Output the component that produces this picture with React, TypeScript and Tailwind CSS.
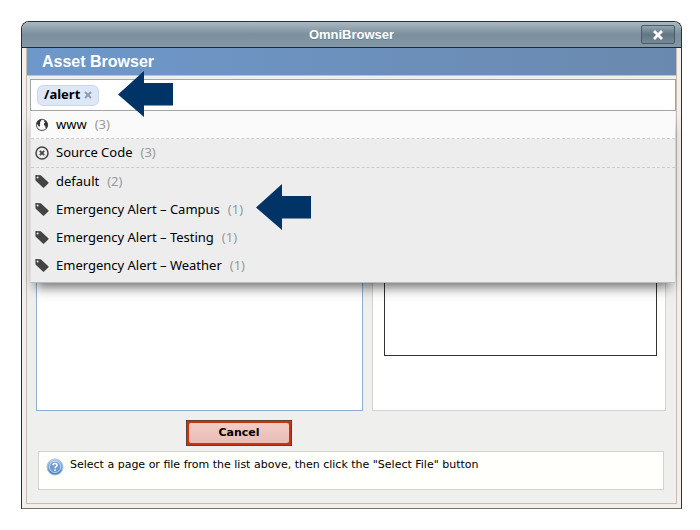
import { useState } from "react";

type TagItem = { name: string; count: number };

const tags: TagItem[] = [
  { name: "default", count: 2 },
  { name: "Emergency Alert – Campus", count: 1 },
  { name: "Emergency Alert – Testing", count: 1 },
  { name: "Emergency Alert – Weather", count: 1 },
];

function GlobeIcon() {
  return (
    <svg viewBox="0 0 14 14" className="h-3.5 w-3.5 shrink-0" aria-hidden="true">
      <circle cx="7" cy="7" r="5.6" fill="#fafafa" stroke="#666" strokeWidth="1.1" />
      <path
        d="M1.3 5.4 2.6 2.9 5 1.4 6.4 1.6 6 3 5 4 5.2 5 4.8 6.4 5 7.6 4.2 9 3.4 8 2.6 6.6ZM9.4 2 11.4 3.2 12.8 6 12.6 8.4 11.2 10.6 10.4 9.6 10.2 7.8 9 7 9 5.6 10 4.800 9.2 3.6Z"
        fill="#333"
      />
    </svg>
  );
}

function SourceIcon() {
  return (
    <svg viewBox="0 0 14 14" className="h-3.5 w-3.5 shrink-0" aria-hidden="true">
      <circle cx="7" cy="7" r="6" fill="none" stroke="#444" strokeWidth="1.5" />
      <path d="M4.8 4.8 9.2 9.2M9.2 4.8 4.8 9.2" stroke="#444" strokeWidth="1.8" />
    </svg>
  );
}

function TagIcon() {
  return (
    <svg viewBox="0 0 14 14" className="h-3.5 w-3.5 shrink-0" aria-hidden="true">
      <path
        d="M.3.8Q.3.1 1 .1L5.8.3 13.3 7.2Q13.9 7.8 13.3 8.4L9.1 12.5Q8.5 13.1 7.9 12.5L.5 5.6ZM2.6 1.5A1 1 0 1 0 2.6 3.5 1 1 0 1 0 2.6 1.5Z"
        fill="#444"
        fillRule="evenodd"
      />
    </svg>
  );
}

function HelpIcon() {
  return (
    <svg viewBox="0 0 18 18" className="h-[18px] w-[18px] shrink-0" aria-hidden="true">
      <defs>
        <linearGradient id="help" x1="0" y1="0" x2="0" y2="1">
          <stop offset="0" stopColor="#b9d2f0" />
          <stop offset="1" stopColor="#4379bd" />
        </linearGradient>
      </defs>
      <circle cx="9" cy="9" r="8" fill="url(#help)" stroke="#a9c3e2" />
      <circle cx="9" cy="9" r="5.6" fill="#6f9bd2" stroke="#c6daf1" strokeWidth=".8" />
      <path
        d="M6.9 7.3C6.9 4.9 11.1 4.9 11.1 7.3 11.1 8.7 9 8.7 9 10.3"
        fill="none"
        stroke="#fff"
        strokeWidth="1.5"
      />
      <circle cx="9" cy="12.2" r=".9" fill="#fff" />
    </svg>
  );
}

function Arrow({ className }: { className: string }) {
  return (
    <svg viewBox="0 0 55 46" className={`absolute z-20 h-[46px] w-[55px] ${className}`} aria-hidden="true">
      <path d="M0 23.5 26 0V12H55V34.5H26V46Z" fill="#003366" />
    </svg>
  );
}

function Count({ value }: { value: number }) {
  return <span className="ml-2 text-[#999]">({value})</span>;
}

export default function App() {
  const [query, setQuery] = useState("");

  return (
    <main className="min-h-screen bg-white pt-[21px] pr-[18px] pl-[21px] font-['Liberation_Sans',sans-serif]">
      <section className="rounded-t-lg border border-[#2b3035] border-b-[#777068] bg-[#f3efea]">
        <header className="relative flex h-[26px] items-center justify-center rounded-t-[7px] border-b border-[#1f2a33] bg-linear-to-b from-[#a9b8c3] via-[#7b8f9d] to-[#8297a8]">
          <h1 className="text-[13px] font-bold text-white text-shadow-2xs">OmniBrowser</h1>
          <button
            type="button"
            aria-label="Close"
            className="absolute right-1.5 flex h-[19px] w-[34px] items-center justify-center rounded-xs border border-[#4b5b66] bg-linear-to-b from-[#93a5b2] via-[#627783] to-[#748995]"
          >
            <svg viewBox="0 0 10 10" className="h-2.5 w-2.5">
              <path d="M1 1 9 9M9 1 1 9" stroke="#fff" strokeWidth="2.8" />
            </svg>
          </button>
        </header>

        <div className="mx-1 mb-1 border border-t-0 border-[#c9bbb0] bg-[#efefee]">
          <div className="flex h-7 items-center border-b border-[#b4c8cc] bg-linear-to-r from-[#6e98cb] to-[#6a89ae] pl-[15px]">
            <h2 className="text-base font-bold text-white">Asset Browser</h2>
          </div>

          <div className="relative mt-[3px] ml-[3px]">
            <div className="flex h-8 items-center border border-[#a5a5a5] bg-white pl-1.5 font-['Noto_Sans',sans-serif]">
              <span className="flex h-[21px] shrink-0 items-center gap-1 rounded-md border border-[#ccd6ee] bg-[#dee7f8] px-1.5 text-[13px] font-bold text-black">
                /alert
                <button type="button" aria-label="Remove /alert">
                  <svg viewBox="0 0 8 8" className="h-2 w-2">
                    <path d="M1 1 7 7M7 1 1 7" stroke="#8f9bb5" strokeWidth="2" />
                  </svg>
                </button>
              </span>
              <input
                type="text"
                aria-label="Filter"
                value={query}
                onChange={(e) => setQuery(e.target.value)}
                className="min-w-0 flex-1 px-2 text-[13px] outline-none"
              />
            </div>
            <Arrow className="top-[-8px] left-[88px]" />

            <div className="absolute top-8 right-px left-0 z-10 border-b border-l border-b-[#bbb] border-l-[#ddd] bg-[#ededed] font-['Noto_Sans',sans-serif] text-[13px] text-black shadow-[0_9px_12px_-5px_rgba(0,0,0,0.6)]">
              <button type="button" className="flex h-7 w-full items-center border-b border-dashed border-[#ccc] bg-[#fafafa] pl-1">
                <GlobeIcon />
                <span className="ml-[7px]">www</span>
                <Count value={3} />
              </button>
              <button type="button" className="flex h-[29px] w-full items-center border-b border-dashed border-[#ccc] pl-1">
                <SourceIcon />
                <span className="ml-[7px]">Source Code</span>
                <Count value={3} />
              </button>
              <ul className="pb-0.5">
                {tags.map((tag) => (
                  <li key={tag.name}>
                    <button type="button" className="flex h-7 w-full items-center pl-1">
                      <TagIcon />
                      <span className="ml-[7px]">{tag.name}</span>
                      <Count value={tag.count} />
                    </button>
                  </li>
                ))}
              </ul>
              <Arrow className="top-[73px] left-[225px]" />
            </div>
          </div>

          <div className="grid grid-cols-[327fr_294fr] gap-[9px] pr-2.5 pl-[9px]">
            <div className="h-[300px] border border-[#8fb0d3] bg-white" />
            <div className="h-[300px] border border-[#d3d3d3] bg-white pr-2 pl-[11px]">
              <div className="h-[244px] border border-[#333]" />
            </div>
          </div>

          <div className="mt-[9px] flex pl-[159px]">
            <button
              type="button"
              className="h-[26px] w-[106px] border border-[#5c4038] bg-[#c93410] p-0.5 font-['DejaVu_Sans',sans-serif] text-[11px] font-bold text-black"
            >
              <span className="flex h-full items-center justify-center rounded-xs bg-linear-to-b from-[#f3cdc7] to-[#e8bdb6]">Cancel</span>
            </button>
          </div>

          <div className="mt-[5px] mr-3 mb-[13px] ml-[11px] flex h-[39px] gap-1.5 border border-[#d3d3d0] bg-[#fffffb] pt-1.5 pl-[7px]">
            <HelpIcon />
            <p className="font-['DejaVu_Sans',sans-serif] text-[11px] leading-[14px] text-black">
              Select a page or file from the list above, then click the "Select File" button
            </p>
          </div>
        </div>
      </section>
    </main>
  );
}
